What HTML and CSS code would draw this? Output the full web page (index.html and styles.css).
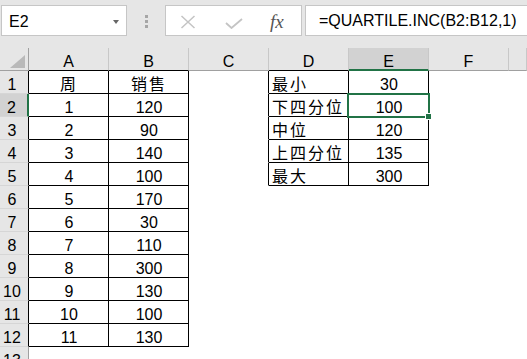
FILE: index.html
```html
<!DOCTYPE html>
<html lang="zh-CN">
<head>
    <meta charset="UTF-8">
    <title>QUARTILE.INC</title>
    <link rel="stylesheet" href="styles.css">
</head>
<body>

<!-- Строка формул -->
<div class="bar">
    <div class="namebox">
        <span>E2</span>
        <span class="drop"></span>
    </div>
    <div class="grip"><i></i><i></i><i></i></div>
    <div class="btns">
        <svg class="ico-x" width="16" height="14" viewBox="0 0 16 14"><path d="M1.5 1L14.5 13M14.5 1L1.5 13" stroke="#c4c4c4" stroke-width="1.5" fill="none"/></svg>
        <svg class="ico-ok" width="18" height="11" viewBox="0 0 18 11"><path d="M1 5L6.5 10L17 1" stroke="#c4c4c4" stroke-width="1.8" fill="none"/></svg>
        <span class="fx">fx</span>
    </div>
    <div class="formula">=QUARTILE.INC(B2:B12,1)</div>
</div>

<!-- Лист -->
<div class="sheet">
    <div class="ch corner"><span class="tri"></span></div>
    <div class="ch k">A</div>
    <div class="ch k">B</div>
    <div class="ch">C</div>
    <div class="ch k">D</div>
    <div class="ch on">E</div>
    <div class="ch">F</div>
    <div class="ch"></div>

    <div class="rh k">1</div>
    <div class="t ct zh">周</div>
    <div class="t ct zh">销售</div>
    <div class="lk"></div>
    <div class="t zh">最小</div>
    <div class="t ct">30</div>
    <div></div><div></div>

    <div class="rh k on">2</div>
    <div class="t ct">1</div>
    <div class="t ct">120</div>
    <div class="lk"></div>
    <div class="t zh">下四分位</div>
    <div class="t ct sel">100</div>
    <div></div><div></div>

    <div class="rh k">3</div>
    <div class="t ct">2</div>
    <div class="t ct">90</div>
    <div class="lk"></div>
    <div class="t zh">中位</div>
    <div class="t ct">120</div>
    <div></div><div></div>

    <div class="rh k">4</div>
    <div class="t ct">3</div>
    <div class="t ct">140</div>
    <div class="lk"></div>
    <div class="t zh">上四分位</div>
    <div class="t ct">135</div>
    <div></div><div></div>

    <div class="rh k">5</div>
    <div class="t ct">4</div>
    <div class="t ct">100</div>
    <div class="lk"></div>
    <div class="t zh">最大</div>
    <div class="t ct">300</div>
    <div></div><div></div>

    <div class="rh k">6</div>
    <div class="t ct">5</div>
    <div class="t ct">170</div>
    <div></div><div></div><div></div><div></div><div></div>

    <div class="rh k">7</div>
    <div class="t ct">6</div>
    <div class="t ct">30</div>
    <div></div><div></div><div></div><div></div><div></div>

    <div class="rh k">8</div>
    <div class="t ct">7</div>
    <div class="t ct">110</div>
    <div></div><div></div><div></div><div></div><div></div>

    <div class="rh k">9</div>
    <div class="t ct">8</div>
    <div class="t ct">300</div>
    <div></div><div></div><div></div><div></div><div></div>

    <div class="rh k">10</div>
    <div class="t ct">9</div>
    <div class="t ct">130</div>
    <div></div><div></div><div></div><div></div><div></div>

    <div class="rh k">11</div>
    <div class="t ct">10</div>
    <div class="t ct">100</div>
    <div></div><div></div><div></div><div></div><div></div>

    <div class="rh k">12</div>
    <div class="t ct">11</div>
    <div class="t ct">130</div>
    <div></div><div></div><div></div><div></div><div></div>

    <div class="rh">13</div>
    <div></div><div></div><div></div><div></div><div></div><div></div><div></div>
</div>

</body>
</html>
```

FILE: styles.css
```css
/* Общие */
body {
    margin: 0;
    width: 527px;
    height: 359px;
    overflow: hidden;
    background: #e6e6e6;
    font-family: "Liberation Sans", "Noto Sans CJK SC", sans-serif;
    font-size: 16px;
    color: #000;
}

/* Строка формул */
.bar {
    display: flex;
    height: 48px;
    box-sizing: border-box;
    padding: 5px 0 12px 1px;
}
.namebox {
    width: 126px;
    box-sizing: border-box;
    background: #fff;
    border: 1px solid #c6c6c6;
    display: flex;
    justify-content: space-between;
    align-items: center;
    padding: 2px 7px 0 7px;
}
.drop {
    width: 0;
    height: 0;
    border-left: 3px solid transparent;
    border-right: 3px solid transparent;
    border-top: 4px solid #666;
    margin-top: 1px;
}
.grip {
    width: 38px;
    display: flex;
    flex-direction: column;
    align-items: center;
    justify-content: center;
    gap: 2px;
    padding-top: 1px;
}
.grip i {
    display: block;
    width: 3px;
    height: 3px;
    background: #a6a6a6;
}
.btns {
    width: 137px;
    box-sizing: border-box;
    background: #fff;
    border: 1px solid #c6c6c6;
    display: flex;
    align-items: center;
    padding-left: 14px;
}
.ico-x { margin-top: 2px; }
.ico-ok { margin-left: 29px; margin-top: 5px; }
.fx {
    margin-left: 27px;
    font-family: "Liberation Serif", serif;
    font-style: italic;
    font-size: 19px;
    color: #555;
    margin-top: 2px;
}
.formula {
    flex: 1;
    margin-left: 3px;
    margin-right: -10px;
    background: #fff;
    border: 1px solid #c6c6c6;
    padding: 6px 0 0 13px;
    line-height: 18px;
}

/* Сетка листа */
.sheet {
    display: grid;
    grid-template-columns: 29px repeat(6, 80px) 1fr;
    grid-auto-rows: 23px;
}
.sheet > div {
    box-sizing: border-box;
    background: #fff;
    border-right: 1px solid transparent;
    border-bottom: 1px solid transparent;
    padding: 5px 2px 0 3px;
    line-height: 18px;
    white-space: nowrap;
}

/* Заголовки столбцов */
.sheet > .ch {
    background: #e6e6e6;
    border-right-color: #c8c8c8;
    border-bottom-color: #a0a0a0;
    text-align: center;
    padding-left: 0;
    padding-right: 0;
}
.sheet > .ch.k { border-bottom-color: #000; }
.sheet > .ch.on {
    background: #d2d2d2;
    border-bottom: 2px solid #217346;
}
.sheet > .corner {
    display: flex;
    justify-content: flex-end;
    align-items: flex-end;
    padding: 0 3px 2px 0;
    border-right-color: #a0a0a0;
}
.tri {
    width: 0;
    height: 0;
    border-left: 15px solid transparent;
    border-bottom: 13px solid #b9b9b9;
}

/* Заголовки строк */
.sheet > .rh {
    background: #e6e6e6;
    border-right-color: #a0a0a0;
    border-bottom-color: #d6d6d6;
    text-align: center;
    padding-left: 0;
    padding-right: 4px;
}
.sheet > .rh.k { border-right-color: #000; }
.sheet > .rh.on {
    background: #d2d2d2;
    border-right: 2px solid #217346;
}

/* Ячейки таблиц */
.sheet > .t {
    border-right-color: #000;
    border-bottom-color: #000;
}
.sheet > .lk { border-right-color: #000; }
.ct { text-align: center; }
.zh { letter-spacing: 2px; }

/* Активная ячейка */
.sel { position: relative; }
.sel::after {
    content: "";
    position: absolute;
    top: -1px;
    left: -2px;
    right: -2px;
    bottom: -2px;
    border: 2px solid #217346;
}
.sel::before {
    content: "";
    position: absolute;
    right: -3px;
    bottom: -3px;
    width: 5px;
    height: 5px;
    background: #217346;
    outline: 1px solid #fff;
    z-index: 1;
}
```
